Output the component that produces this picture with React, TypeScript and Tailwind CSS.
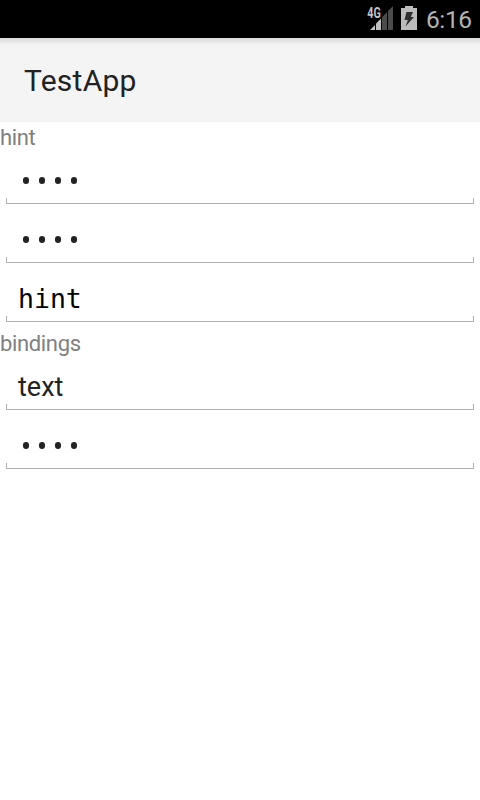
import React from "react";

function Field({ children }: { children: React.ReactNode }) {
  return (
    <div className="flex h-[59px] flex-col px-[6px]">
      <div className="flex h-[47px] items-center pl-3">{children}</div>
      <div className="h-[6px] shrink-0 border-x border-b border-[#b2b2b2]" />
    </div>
  );
}

function Dots() {
  return (
    <div className="flex gap-[10px] pt-[11px] pl-[5px]" aria-label="password">
      {[0, 1, 2, 3].map((i) => (
        <span key={i} className="h-[7px] w-[6px] rounded-[3px] bg-[#222]" />
      ))}
    </div>
  );
}

function Label({ children }: { children: React.ReactNode }) {
  return (
    <div className="h-[29px] text-[22px] leading-[32px] tracking-[-0.35px] text-[#808080]">{children}</div>
  );
}

export default function App() {
  return (
    <div className="flex h-[800px] w-[480px] flex-col overflow-hidden bg-white font-['Roboto',sans-serif]">
      <div className="flex h-[38px] shrink-0 items-center bg-black text-[#bebebe]">
        <svg className="ml-[366px] shrink-0" width="28" height="38" viewBox="0 0 28 38">
          <text x="1.3" y="17.5" fontSize="14" fontWeight="700" fill="#c4c4c4" textLength="13.5" lengthAdjust="spacingAndGlyphs">4G</text>
          <path d="M4 30L9 25V30Z" fill="#c0c0c0" />
          <path d="M10 23.5L15 18.5V30H10Z" fill="#c0c0c0" />
          <path d="M16 17.3L21 12V30H16ZM22 11L27 6V30H22Z" fill="#4b4b4b" />
        </svg>
        <svg className="ml-[7px] shrink-0" width="16" height="38" viewBox="0 0 16 38">
          <path d="M4 6H12V8H16V30H0V8H4Z" fill="#bcbcbc" />
          <path d="M5.5 12H12L9.8 17H13L4.5 26.5L6.8 20H3.5Z" fill="#303030" />
        </svg>
        <span className="ml-[9px] text-[24.5px] leading-[37px] font-normal tracking-[-0.4px] text-[#b4b4b4]">6:16</span>
      </div>
      <div className="flex h-[84px] shrink-0 items-center bg-[#f4f4f4] bg-linear-to-b from-[#dadada] via-[#f4f4f4] via-[9%] to-[#f4f4f4] pl-6">
        <span className="pt-[2px] text-[30px] leading-[34px] tracking-[0.25px] text-[#222]">TestApp</span>
      </div>
      <Label>hint</Label>
      <Field><Dots /></Field>
      <Field><Dots /></Field>
      <Field>
        <span className="pt-[13px] font-['DejaVu_Sans_Mono',monospace] text-[26.5px] leading-[32px] text-black">hint</span>
      </Field>
      <Label>bindings</Label>
      <Field>
        <span className="pt-[13px] text-[27px] leading-[32px] text-[#222]">text</span>
      </Field>
      <Field><Dots /></Field>
    </div>
  );
}
